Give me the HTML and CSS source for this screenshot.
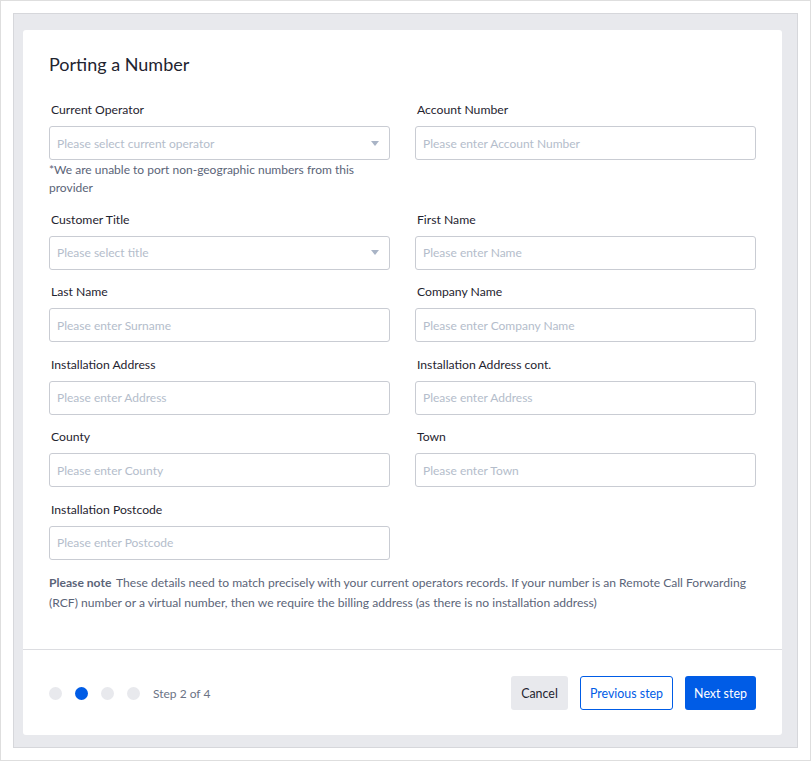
FILE: index.html
```html
<!DOCTYPE html>
<html lang="en">
<head>
  <meta charset="UTF-8">
  <meta name="viewport" content="width=device-width, initial-scale=1.0">
  <title>Porting a Number</title>
  <link rel="stylesheet" href="styles.css">
</head>
<body>
  <div class="frame">
    <div class="backdrop">
      <div class="card">
        <div class="content">
          <h1>Porting a Number</h1>
          <div class="form">
            <div class="field">
              <label>Current Operator</label>
              <div class="select">
                <span>Please select current operator</span>
                <span class="caret"></span>
              </div>
              <p class="hint">*We are unable to port non-geographic numbers from this provider</p>
            </div>
            <div class="field">
              <label>Account Number</label>
              <input type="text" placeholder="Please enter Account Number">
            </div>
            <div class="field">
              <label>Customer Title</label>
              <div class="select">
                <span>Please select title</span>
                <span class="caret"></span>
              </div>
            </div>
            <div class="field">
              <label>First Name</label>
              <input type="text" placeholder="Please enter Name">
            </div>
            <div class="field">
              <label>Last Name</label>
              <input type="text" placeholder="Please enter Surname">
            </div>
            <div class="field">
              <label>Company Name</label>
              <input type="text" placeholder="Please enter Company Name">
            </div>
            <div class="field">
              <label>Installation Address</label>
              <input type="text" placeholder="Please enter Address">
            </div>
            <div class="field">
              <label>Installation Address cont.</label>
              <input type="text" placeholder="Please enter Address">
            </div>
            <div class="field">
              <label>County</label>
              <input type="text" placeholder="Please enter County">
            </div>
            <div class="field">
              <label>Town</label>
              <input type="text" placeholder="Please enter Town">
            </div>
            <div class="field">
              <label>Installation Postcode</label>
              <input type="text" placeholder="Please enter Postcode">
            </div>
          </div>
          <p class="note"><strong>Please note</strong> These details need to match precisely with your current operators records. If your number is an Remote Call Forwarding (RCF) number or a virtual number, then we require the billing address (as there is no installation address)</p>
        </div>
        <div class="footer">
          <div class="steps">
            <span class="dot"></span>
            <span class="dot active"></span>
            <span class="dot"></span>
            <span class="dot"></span>
            <span class="step-text">Step 2 of 4</span>
          </div>
          <div class="actions">
            <button class="btn cancel">Cancel</button>
            <button class="btn outline">Previous step</button>
            <button class="btn primary">Next step</button>
          </div>
        </div>
      </div>
    </div>
  </div>
</body>
</html>
```

FILE: styles.css
```css
* {
  box-sizing: border-box;
}
body {
  margin: 0;
  font-family: Lato, "Open Sans", sans-serif;
  color: #1f2430;
  background: #fff;
}
.frame {
  width: 811px;
  height: 761px;
  border: 1px solid #dedede;
  padding: 12px;
}
.backdrop {
  height: 735px;
  background: #e8e9ed;
  border: 1px solid #d6d7db;
  padding: 16px 15px 11px 9px;
}
.card {
  background: #fff;
  border-radius: 3px;
  height: 705px;
  display: flex;
  flex-direction: column;
}
.content {
  padding: 22px 25px 0 26px;
  flex: 1;
  border-bottom: 1px solid #dcdde1;
}
h1 {
  margin: 0 0 25px;
  font-size: 18px;
  font-weight: 400;
  line-height: 24px;
  color: #1f2430;
}
.form {
  display: grid;
  grid-template-columns: 340px 340px;
  column-gap: 26px;
  row-gap: 13.5px;
}
.field label {
  display: block;
  font-size: 12.2px;
  line-height: 18px;
  margin: 0 0 7px 2px;
  color: #1f2430;
}
.field input,
.select {
  display: flex;
  align-items: center;
  width: 341px;
  height: 34px;
  border: 1px solid #c9ccd3;
  border-radius: 3px;
  padding: 0 7px;
  font-family: inherit;
  font-size: 12px;
  color: #b4bdcb;
  background: #fff;
}
.field input::placeholder {
  color: #b4bdcb;
}
.select {
  justify-content: space-between;
  padding-right: 10px;
}
.caret {
  width: 0;
  height: 0;
  border-left: 4px solid transparent;
  border-right: 4px solid transparent;
  border-top: 5px solid #a9b4c6;
}
.hint {
  margin: 1px 0 0;
  font-size: 12px;
  line-height: 18px;
  color: #5b6478;
}
.note {
  margin: 13px 0 0;
  font-size: 12.1px;
  line-height: 20px;
  color: #5b6478;
}
.note strong {
  display: inline-block;
  font-weight: 700;
  margin-right: 2px;
}
.footer {
  display: flex;
  justify-content: space-between;
  align-items: center;
  padding: 26px 26px 25px 26px;
}
.steps {
  display: flex;
  align-items: center;
  gap: 13px;
}
.dot {
  width: 13px;
  height: 13px;
  border-radius: 50%;
  background: #e8e9ed;
}
.dot.active {
  background: #005ce6;
}
.step-text {
  font-size: 12px;
  color: #6b7385;
}
.actions {
  display: flex;
  gap: 12px;
}
.btn {
  height: 34px;
  padding: 0;
  border-radius: 3px;
  font-family: inherit;
  font-size: 12.4px;
  white-space: nowrap;
  border: 1px solid transparent;
}
.cancel {
  background: #e8e9ed;
  color: #1f2430;
  width: 57px;
}
.outline {
  background: #fff;
  border-color: #005ce6;
  color: #005ce6;
  width: 93px;
}
.primary {
  background: #005ce6;
  color: #fff;
  width: 71px;
}
```
